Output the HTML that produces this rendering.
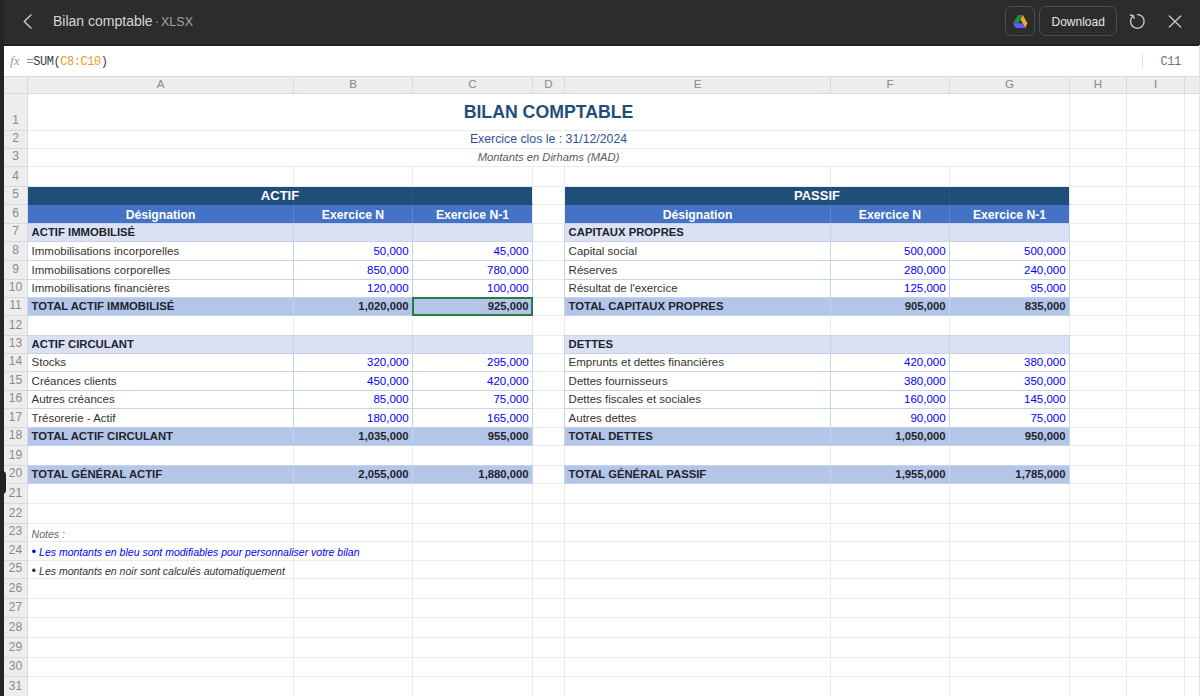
<!DOCTYPE html><html><head><meta charset="utf-8"><style>
*{box-sizing:border-box;margin:0;padding:0}
html,body{width:1200px;height:696px;overflow:hidden;background:#fff;font-family:"Liberation Sans", sans-serif}
.a{position:absolute}
.c{position:absolute;border-right:1px solid #e9eaf2;border-bottom:1px solid #e9eaf2;overflow:visible}
.t{position:absolute;white-space:nowrap;font-size:11.5px;color:#333}
.b{font-weight:700;color:#23232d;font-size:11.3px!important}
.n{color:#0000ff}
.rh{position:absolute;left:4px;width:24px;background:#ededed;border-right:1px solid #d6d9e4;border-bottom:1px solid #d6d9e4;font-size:12px;color:#8a8a8a;text-align:center}
.ch{position:absolute;top:77px;height:17px;background:#ededed;border-right:1px solid #d6d9e4;border-bottom:1px solid #d6d9e4;font-size:11.6px;color:#888;text-align:center;line-height:14.8px}
</style></head><body>

<div class="c" style="left:28px;top:94px;width:1042px;height:37px;"></div>
<div class="c" style="left:28px;top:131px;width:1042px;height:18px;"></div>
<div class="c" style="left:28px;top:149px;width:1042px;height:18px;"></div>
<div class="c" style="left:28px;top:187px;width:505px;height:18px;background:#1f4e79;border-bottom-color:#1f4e79;"></div>
<div class="c" style="left:565px;top:187px;width:505px;height:18px;background:#1f4e79;border-bottom-color:#1f4e79;"></div>
<div class="c" style="left:28px;top:205px;width:266px;height:19px;background:#4472c4;border-bottom-color:#4472c4;border-right-color:#5f86cf;"></div>
<div class="c" style="left:294px;top:205px;width:119px;height:19px;background:#4472c4;border-bottom-color:#4472c4;border-right-color:#5f86cf;"></div>
<div class="c" style="left:413px;top:205px;width:120px;height:19px;background:#4472c4;border-bottom-color:#4472c4;"></div>
<div class="c" style="left:565px;top:205px;width:266px;height:19px;background:#4472c4;border-bottom-color:#4472c4;border-right-color:#5f86cf;"></div>
<div class="c" style="left:831px;top:205px;width:119px;height:19px;background:#4472c4;border-bottom-color:#4472c4;border-right-color:#5f86cf;"></div>
<div class="c" style="left:950px;top:205px;width:120px;height:19px;background:#4472c4;border-bottom-color:#4472c4;"></div>
<div class="c" style="left:28px;top:224px;width:266px;height:18px;background:#d9e1f2;"></div>
<div class="c" style="left:294px;top:224px;width:119px;height:18px;background:#d9e1f2;"></div>
<div class="c" style="left:413px;top:224px;width:120px;height:18px;background:#d9e1f2;"></div>
<div class="c" style="left:28px;top:242px;width:266px;height:19px;"></div>
<div class="c" style="left:294px;top:242px;width:119px;height:19px;"></div>
<div class="c" style="left:413px;top:242px;width:120px;height:19px;"></div>
<div class="c" style="left:28px;top:261px;width:266px;height:19px;"></div>
<div class="c" style="left:294px;top:261px;width:119px;height:19px;"></div>
<div class="c" style="left:413px;top:261px;width:120px;height:19px;"></div>
<div class="c" style="left:28px;top:280px;width:266px;height:18px;"></div>
<div class="c" style="left:294px;top:280px;width:119px;height:18px;"></div>
<div class="c" style="left:413px;top:280px;width:120px;height:18px;"></div>
<div class="c" style="left:28px;top:298px;width:266px;height:18px;background:#b4c6e7;"></div>
<div class="c" style="left:294px;top:298px;width:119px;height:18px;background:#b4c6e7;"></div>
<div class="c" style="left:413px;top:298px;width:120px;height:18px;background:#b4c6e7;"></div>
<div class="c" style="left:28px;top:336px;width:266px;height:18px;background:#d9e1f2;"></div>
<div class="c" style="left:294px;top:336px;width:119px;height:18px;background:#d9e1f2;"></div>
<div class="c" style="left:413px;top:336px;width:120px;height:18px;background:#d9e1f2;"></div>
<div class="c" style="left:28px;top:354px;width:266px;height:18px;"></div>
<div class="c" style="left:294px;top:354px;width:119px;height:18px;"></div>
<div class="c" style="left:413px;top:354px;width:120px;height:18px;"></div>
<div class="c" style="left:28px;top:372px;width:266px;height:19px;"></div>
<div class="c" style="left:294px;top:372px;width:119px;height:19px;"></div>
<div class="c" style="left:413px;top:372px;width:120px;height:19px;"></div>
<div class="c" style="left:28px;top:391px;width:266px;height:18px;"></div>
<div class="c" style="left:294px;top:391px;width:119px;height:18px;"></div>
<div class="c" style="left:413px;top:391px;width:120px;height:18px;"></div>
<div class="c" style="left:28px;top:409px;width:266px;height:19px;"></div>
<div class="c" style="left:294px;top:409px;width:119px;height:19px;"></div>
<div class="c" style="left:413px;top:409px;width:120px;height:19px;"></div>
<div class="c" style="left:28px;top:428px;width:266px;height:18px;background:#b4c6e7;"></div>
<div class="c" style="left:294px;top:428px;width:119px;height:18px;background:#b4c6e7;"></div>
<div class="c" style="left:413px;top:428px;width:120px;height:18px;background:#b4c6e7;"></div>
<div class="c" style="left:28px;top:466px;width:266px;height:18px;background:#b4c6e7;"></div>
<div class="c" style="left:294px;top:466px;width:119px;height:18px;background:#b4c6e7;"></div>
<div class="c" style="left:413px;top:466px;width:120px;height:18px;background:#b4c6e7;"></div>
<div class="c" style="left:565px;top:224px;width:266px;height:18px;background:#d9e1f2;"></div>
<div class="c" style="left:831px;top:224px;width:119px;height:18px;background:#d9e1f2;"></div>
<div class="c" style="left:950px;top:224px;width:120px;height:18px;background:#d9e1f2;"></div>
<div class="c" style="left:565px;top:242px;width:266px;height:19px;"></div>
<div class="c" style="left:831px;top:242px;width:119px;height:19px;"></div>
<div class="c" style="left:950px;top:242px;width:120px;height:19px;"></div>
<div class="c" style="left:565px;top:261px;width:266px;height:19px;"></div>
<div class="c" style="left:831px;top:261px;width:119px;height:19px;"></div>
<div class="c" style="left:950px;top:261px;width:120px;height:19px;"></div>
<div class="c" style="left:565px;top:280px;width:266px;height:18px;"></div>
<div class="c" style="left:831px;top:280px;width:119px;height:18px;"></div>
<div class="c" style="left:950px;top:280px;width:120px;height:18px;"></div>
<div class="c" style="left:565px;top:298px;width:266px;height:18px;background:#b4c6e7;"></div>
<div class="c" style="left:831px;top:298px;width:119px;height:18px;background:#b4c6e7;"></div>
<div class="c" style="left:950px;top:298px;width:120px;height:18px;background:#b4c6e7;"></div>
<div class="c" style="left:565px;top:336px;width:266px;height:18px;background:#d9e1f2;"></div>
<div class="c" style="left:831px;top:336px;width:119px;height:18px;background:#d9e1f2;"></div>
<div class="c" style="left:950px;top:336px;width:120px;height:18px;background:#d9e1f2;"></div>
<div class="c" style="left:565px;top:354px;width:266px;height:18px;"></div>
<div class="c" style="left:831px;top:354px;width:119px;height:18px;"></div>
<div class="c" style="left:950px;top:354px;width:120px;height:18px;"></div>
<div class="c" style="left:565px;top:372px;width:266px;height:19px;"></div>
<div class="c" style="left:831px;top:372px;width:119px;height:19px;"></div>
<div class="c" style="left:950px;top:372px;width:120px;height:19px;"></div>
<div class="c" style="left:565px;top:391px;width:266px;height:18px;"></div>
<div class="c" style="left:831px;top:391px;width:119px;height:18px;"></div>
<div class="c" style="left:950px;top:391px;width:120px;height:18px;"></div>
<div class="c" style="left:565px;top:409px;width:266px;height:19px;"></div>
<div class="c" style="left:831px;top:409px;width:119px;height:19px;"></div>
<div class="c" style="left:950px;top:409px;width:120px;height:19px;"></div>
<div class="c" style="left:565px;top:428px;width:266px;height:18px;background:#b4c6e7;"></div>
<div class="c" style="left:831px;top:428px;width:119px;height:18px;background:#b4c6e7;"></div>
<div class="c" style="left:950px;top:428px;width:120px;height:18px;background:#b4c6e7;"></div>
<div class="c" style="left:565px;top:466px;width:266px;height:18px;background:#b4c6e7;"></div>
<div class="c" style="left:831px;top:466px;width:119px;height:18px;background:#b4c6e7;"></div>
<div class="c" style="left:950px;top:466px;width:120px;height:18px;background:#b4c6e7;"></div>
<div class="c" style="left:28px;top:524px;width:266px;height:18px;"></div>
<div class="c" style="left:28px;top:542px;width:266px;height:19px;"></div>
<div class="c" style="left:28px;top:561px;width:266px;height:18px;"></div>
<div class="c" style="left:1070px;top:94px;width:57px;height:37px;"></div>
<div class="c" style="left:1127px;top:94px;width:58px;height:37px;"></div>
<div class="c" style="left:1185px;top:94px;width:58px;height:37px;"></div>
<div class="c" style="left:1070px;top:131px;width:57px;height:18px;"></div>
<div class="c" style="left:1127px;top:131px;width:58px;height:18px;"></div>
<div class="c" style="left:1185px;top:131px;width:58px;height:18px;"></div>
<div class="c" style="left:1070px;top:149px;width:57px;height:18px;"></div>
<div class="c" style="left:1127px;top:149px;width:58px;height:18px;"></div>
<div class="c" style="left:1185px;top:149px;width:58px;height:18px;"></div>
<div class="c" style="left:28px;top:167px;width:266px;height:20px;"></div>
<div class="c" style="left:294px;top:167px;width:119px;height:20px;"></div>
<div class="c" style="left:413px;top:167px;width:120px;height:20px;"></div>
<div class="c" style="left:533px;top:167px;width:32px;height:20px;"></div>
<div class="c" style="left:565px;top:167px;width:266px;height:20px;"></div>
<div class="c" style="left:831px;top:167px;width:119px;height:20px;"></div>
<div class="c" style="left:950px;top:167px;width:120px;height:20px;"></div>
<div class="c" style="left:1070px;top:167px;width:57px;height:20px;"></div>
<div class="c" style="left:1127px;top:167px;width:58px;height:20px;"></div>
<div class="c" style="left:1185px;top:167px;width:58px;height:20px;"></div>
<div class="c" style="left:533px;top:187px;width:32px;height:18px;"></div>
<div class="c" style="left:1070px;top:187px;width:57px;height:18px;"></div>
<div class="c" style="left:1127px;top:187px;width:58px;height:18px;"></div>
<div class="c" style="left:1185px;top:187px;width:58px;height:18px;"></div>
<div class="c" style="left:533px;top:205px;width:32px;height:19px;"></div>
<div class="c" style="left:1070px;top:205px;width:57px;height:19px;"></div>
<div class="c" style="left:1127px;top:205px;width:58px;height:19px;"></div>
<div class="c" style="left:1185px;top:205px;width:58px;height:19px;"></div>
<div class="c" style="left:533px;top:224px;width:32px;height:18px;"></div>
<div class="c" style="left:1070px;top:224px;width:57px;height:18px;"></div>
<div class="c" style="left:1127px;top:224px;width:58px;height:18px;"></div>
<div class="c" style="left:1185px;top:224px;width:58px;height:18px;"></div>
<div class="c" style="left:533px;top:242px;width:32px;height:19px;"></div>
<div class="c" style="left:1070px;top:242px;width:57px;height:19px;"></div>
<div class="c" style="left:1127px;top:242px;width:58px;height:19px;"></div>
<div class="c" style="left:1185px;top:242px;width:58px;height:19px;"></div>
<div class="c" style="left:533px;top:261px;width:32px;height:19px;"></div>
<div class="c" style="left:1070px;top:261px;width:57px;height:19px;"></div>
<div class="c" style="left:1127px;top:261px;width:58px;height:19px;"></div>
<div class="c" style="left:1185px;top:261px;width:58px;height:19px;"></div>
<div class="c" style="left:533px;top:280px;width:32px;height:18px;"></div>
<div class="c" style="left:1070px;top:280px;width:57px;height:18px;"></div>
<div class="c" style="left:1127px;top:280px;width:58px;height:18px;"></div>
<div class="c" style="left:1185px;top:280px;width:58px;height:18px;"></div>
<div class="c" style="left:533px;top:298px;width:32px;height:18px;"></div>
<div class="c" style="left:1070px;top:298px;width:57px;height:18px;"></div>
<div class="c" style="left:1127px;top:298px;width:58px;height:18px;"></div>
<div class="c" style="left:1185px;top:298px;width:58px;height:18px;"></div>
<div class="c" style="left:28px;top:316px;width:266px;height:20px;"></div>
<div class="c" style="left:294px;top:316px;width:119px;height:20px;"></div>
<div class="c" style="left:413px;top:316px;width:120px;height:20px;"></div>
<div class="c" style="left:533px;top:316px;width:32px;height:20px;"></div>
<div class="c" style="left:565px;top:316px;width:266px;height:20px;"></div>
<div class="c" style="left:831px;top:316px;width:119px;height:20px;"></div>
<div class="c" style="left:950px;top:316px;width:120px;height:20px;"></div>
<div class="c" style="left:1070px;top:316px;width:57px;height:20px;"></div>
<div class="c" style="left:1127px;top:316px;width:58px;height:20px;"></div>
<div class="c" style="left:1185px;top:316px;width:58px;height:20px;"></div>
<div class="c" style="left:533px;top:336px;width:32px;height:18px;"></div>
<div class="c" style="left:1070px;top:336px;width:57px;height:18px;"></div>
<div class="c" style="left:1127px;top:336px;width:58px;height:18px;"></div>
<div class="c" style="left:1185px;top:336px;width:58px;height:18px;"></div>
<div class="c" style="left:533px;top:354px;width:32px;height:18px;"></div>
<div class="c" style="left:1070px;top:354px;width:57px;height:18px;"></div>
<div class="c" style="left:1127px;top:354px;width:58px;height:18px;"></div>
<div class="c" style="left:1185px;top:354px;width:58px;height:18px;"></div>
<div class="c" style="left:533px;top:372px;width:32px;height:19px;"></div>
<div class="c" style="left:1070px;top:372px;width:57px;height:19px;"></div>
<div class="c" style="left:1127px;top:372px;width:58px;height:19px;"></div>
<div class="c" style="left:1185px;top:372px;width:58px;height:19px;"></div>
<div class="c" style="left:533px;top:391px;width:32px;height:18px;"></div>
<div class="c" style="left:1070px;top:391px;width:57px;height:18px;"></div>
<div class="c" style="left:1127px;top:391px;width:58px;height:18px;"></div>
<div class="c" style="left:1185px;top:391px;width:58px;height:18px;"></div>
<div class="c" style="left:533px;top:409px;width:32px;height:19px;"></div>
<div class="c" style="left:1070px;top:409px;width:57px;height:19px;"></div>
<div class="c" style="left:1127px;top:409px;width:58px;height:19px;"></div>
<div class="c" style="left:1185px;top:409px;width:58px;height:19px;"></div>
<div class="c" style="left:533px;top:428px;width:32px;height:18px;"></div>
<div class="c" style="left:1070px;top:428px;width:57px;height:18px;"></div>
<div class="c" style="left:1127px;top:428px;width:58px;height:18px;"></div>
<div class="c" style="left:1185px;top:428px;width:58px;height:18px;"></div>
<div class="c" style="left:28px;top:446px;width:266px;height:20px;"></div>
<div class="c" style="left:294px;top:446px;width:119px;height:20px;"></div>
<div class="c" style="left:413px;top:446px;width:120px;height:20px;"></div>
<div class="c" style="left:533px;top:446px;width:32px;height:20px;"></div>
<div class="c" style="left:565px;top:446px;width:266px;height:20px;"></div>
<div class="c" style="left:831px;top:446px;width:119px;height:20px;"></div>
<div class="c" style="left:950px;top:446px;width:120px;height:20px;"></div>
<div class="c" style="left:1070px;top:446px;width:57px;height:20px;"></div>
<div class="c" style="left:1127px;top:446px;width:58px;height:20px;"></div>
<div class="c" style="left:1185px;top:446px;width:58px;height:20px;"></div>
<div class="c" style="left:533px;top:466px;width:32px;height:18px;"></div>
<div class="c" style="left:1070px;top:466px;width:57px;height:18px;"></div>
<div class="c" style="left:1127px;top:466px;width:58px;height:18px;"></div>
<div class="c" style="left:1185px;top:466px;width:58px;height:18px;"></div>
<div class="c" style="left:28px;top:484px;width:266px;height:20px;"></div>
<div class="c" style="left:294px;top:484px;width:119px;height:20px;"></div>
<div class="c" style="left:413px;top:484px;width:120px;height:20px;"></div>
<div class="c" style="left:533px;top:484px;width:32px;height:20px;"></div>
<div class="c" style="left:565px;top:484px;width:266px;height:20px;"></div>
<div class="c" style="left:831px;top:484px;width:119px;height:20px;"></div>
<div class="c" style="left:950px;top:484px;width:120px;height:20px;"></div>
<div class="c" style="left:1070px;top:484px;width:57px;height:20px;"></div>
<div class="c" style="left:1127px;top:484px;width:58px;height:20px;"></div>
<div class="c" style="left:1185px;top:484px;width:58px;height:20px;"></div>
<div class="c" style="left:28px;top:504px;width:266px;height:20px;"></div>
<div class="c" style="left:294px;top:504px;width:119px;height:20px;"></div>
<div class="c" style="left:413px;top:504px;width:120px;height:20px;"></div>
<div class="c" style="left:533px;top:504px;width:32px;height:20px;"></div>
<div class="c" style="left:565px;top:504px;width:266px;height:20px;"></div>
<div class="c" style="left:831px;top:504px;width:119px;height:20px;"></div>
<div class="c" style="left:950px;top:504px;width:120px;height:20px;"></div>
<div class="c" style="left:1070px;top:504px;width:57px;height:20px;"></div>
<div class="c" style="left:1127px;top:504px;width:58px;height:20px;"></div>
<div class="c" style="left:1185px;top:504px;width:58px;height:20px;"></div>
<div class="c" style="left:294px;top:524px;width:119px;height:18px;"></div>
<div class="c" style="left:413px;top:524px;width:120px;height:18px;"></div>
<div class="c" style="left:533px;top:524px;width:32px;height:18px;"></div>
<div class="c" style="left:565px;top:524px;width:266px;height:18px;"></div>
<div class="c" style="left:831px;top:524px;width:119px;height:18px;"></div>
<div class="c" style="left:950px;top:524px;width:120px;height:18px;"></div>
<div class="c" style="left:1070px;top:524px;width:57px;height:18px;"></div>
<div class="c" style="left:1127px;top:524px;width:58px;height:18px;"></div>
<div class="c" style="left:1185px;top:524px;width:58px;height:18px;"></div>
<div class="c" style="left:294px;top:542px;width:119px;height:19px;"></div>
<div class="c" style="left:413px;top:542px;width:120px;height:19px;"></div>
<div class="c" style="left:533px;top:542px;width:32px;height:19px;"></div>
<div class="c" style="left:565px;top:542px;width:266px;height:19px;"></div>
<div class="c" style="left:831px;top:542px;width:119px;height:19px;"></div>
<div class="c" style="left:950px;top:542px;width:120px;height:19px;"></div>
<div class="c" style="left:1070px;top:542px;width:57px;height:19px;"></div>
<div class="c" style="left:1127px;top:542px;width:58px;height:19px;"></div>
<div class="c" style="left:1185px;top:542px;width:58px;height:19px;"></div>
<div class="c" style="left:294px;top:561px;width:119px;height:18px;"></div>
<div class="c" style="left:413px;top:561px;width:120px;height:18px;"></div>
<div class="c" style="left:533px;top:561px;width:32px;height:18px;"></div>
<div class="c" style="left:565px;top:561px;width:266px;height:18px;"></div>
<div class="c" style="left:831px;top:561px;width:119px;height:18px;"></div>
<div class="c" style="left:950px;top:561px;width:120px;height:18px;"></div>
<div class="c" style="left:1070px;top:561px;width:57px;height:18px;"></div>
<div class="c" style="left:1127px;top:561px;width:58px;height:18px;"></div>
<div class="c" style="left:1185px;top:561px;width:58px;height:18px;"></div>
<div class="c" style="left:28px;top:579px;width:266px;height:20px;"></div>
<div class="c" style="left:294px;top:579px;width:119px;height:20px;"></div>
<div class="c" style="left:413px;top:579px;width:120px;height:20px;"></div>
<div class="c" style="left:533px;top:579px;width:32px;height:20px;"></div>
<div class="c" style="left:565px;top:579px;width:266px;height:20px;"></div>
<div class="c" style="left:831px;top:579px;width:119px;height:20px;"></div>
<div class="c" style="left:950px;top:579px;width:120px;height:20px;"></div>
<div class="c" style="left:1070px;top:579px;width:57px;height:20px;"></div>
<div class="c" style="left:1127px;top:579px;width:58px;height:20px;"></div>
<div class="c" style="left:1185px;top:579px;width:58px;height:20px;"></div>
<div class="c" style="left:28px;top:599px;width:266px;height:19px;"></div>
<div class="c" style="left:294px;top:599px;width:119px;height:19px;"></div>
<div class="c" style="left:413px;top:599px;width:120px;height:19px;"></div>
<div class="c" style="left:533px;top:599px;width:32px;height:19px;"></div>
<div class="c" style="left:565px;top:599px;width:266px;height:19px;"></div>
<div class="c" style="left:831px;top:599px;width:119px;height:19px;"></div>
<div class="c" style="left:950px;top:599px;width:120px;height:19px;"></div>
<div class="c" style="left:1070px;top:599px;width:57px;height:19px;"></div>
<div class="c" style="left:1127px;top:599px;width:58px;height:19px;"></div>
<div class="c" style="left:1185px;top:599px;width:58px;height:19px;"></div>
<div class="c" style="left:28px;top:618px;width:266px;height:20px;"></div>
<div class="c" style="left:294px;top:618px;width:119px;height:20px;"></div>
<div class="c" style="left:413px;top:618px;width:120px;height:20px;"></div>
<div class="c" style="left:533px;top:618px;width:32px;height:20px;"></div>
<div class="c" style="left:565px;top:618px;width:266px;height:20px;"></div>
<div class="c" style="left:831px;top:618px;width:119px;height:20px;"></div>
<div class="c" style="left:950px;top:618px;width:120px;height:20px;"></div>
<div class="c" style="left:1070px;top:618px;width:57px;height:20px;"></div>
<div class="c" style="left:1127px;top:618px;width:58px;height:20px;"></div>
<div class="c" style="left:1185px;top:618px;width:58px;height:20px;"></div>
<div class="c" style="left:28px;top:638px;width:266px;height:20px;"></div>
<div class="c" style="left:294px;top:638px;width:119px;height:20px;"></div>
<div class="c" style="left:413px;top:638px;width:120px;height:20px;"></div>
<div class="c" style="left:533px;top:638px;width:32px;height:20px;"></div>
<div class="c" style="left:565px;top:638px;width:266px;height:20px;"></div>
<div class="c" style="left:831px;top:638px;width:119px;height:20px;"></div>
<div class="c" style="left:950px;top:638px;width:120px;height:20px;"></div>
<div class="c" style="left:1070px;top:638px;width:57px;height:20px;"></div>
<div class="c" style="left:1127px;top:638px;width:58px;height:20px;"></div>
<div class="c" style="left:1185px;top:638px;width:58px;height:20px;"></div>
<div class="c" style="left:28px;top:658px;width:266px;height:19px;"></div>
<div class="c" style="left:294px;top:658px;width:119px;height:19px;"></div>
<div class="c" style="left:413px;top:658px;width:120px;height:19px;"></div>
<div class="c" style="left:533px;top:658px;width:32px;height:19px;"></div>
<div class="c" style="left:565px;top:658px;width:266px;height:19px;"></div>
<div class="c" style="left:831px;top:658px;width:119px;height:19px;"></div>
<div class="c" style="left:950px;top:658px;width:120px;height:19px;"></div>
<div class="c" style="left:1070px;top:658px;width:57px;height:19px;"></div>
<div class="c" style="left:1127px;top:658px;width:58px;height:19px;"></div>
<div class="c" style="left:1185px;top:658px;width:58px;height:19px;"></div>
<div class="c" style="left:28px;top:677px;width:266px;height:20px;"></div>
<div class="c" style="left:294px;top:677px;width:119px;height:20px;"></div>
<div class="c" style="left:413px;top:677px;width:120px;height:20px;"></div>
<div class="c" style="left:533px;top:677px;width:32px;height:20px;"></div>
<div class="c" style="left:565px;top:677px;width:266px;height:20px;"></div>
<div class="c" style="left:831px;top:677px;width:119px;height:20px;"></div>
<div class="c" style="left:950px;top:677px;width:120px;height:20px;"></div>
<div class="c" style="left:1070px;top:677px;width:57px;height:20px;"></div>
<div class="c" style="left:1127px;top:677px;width:58px;height:20px;"></div>
<div class="c" style="left:1185px;top:677px;width:58px;height:20px;"></div>
<div class="a" style="left:27px;top:223px;width:267px;height:19px;border:1px solid #c6d3ef;"></div>
<div class="a" style="left:293px;top:223px;width:120px;height:19px;border:1px solid #c6d3ef;"></div>
<div class="a" style="left:412px;top:223px;width:121px;height:19px;border:1px solid #c6d3ef;"></div>
<div class="a" style="left:27px;top:241px;width:267px;height:20px;border:1px solid #c6d3ef;"></div>
<div class="a" style="left:293px;top:241px;width:120px;height:20px;border:1px solid #c6d3ef;"></div>
<div class="a" style="left:412px;top:241px;width:121px;height:20px;border:1px solid #c6d3ef;"></div>
<div class="a" style="left:27px;top:260px;width:267px;height:20px;border:1px solid #c6d3ef;"></div>
<div class="a" style="left:293px;top:260px;width:120px;height:20px;border:1px solid #c6d3ef;"></div>
<div class="a" style="left:412px;top:260px;width:121px;height:20px;border:1px solid #c6d3ef;"></div>
<div class="a" style="left:27px;top:279px;width:267px;height:19px;border:1px solid #c6d3ef;"></div>
<div class="a" style="left:293px;top:279px;width:120px;height:19px;border:1px solid #c6d3ef;"></div>
<div class="a" style="left:412px;top:279px;width:121px;height:19px;border:1px solid #c6d3ef;"></div>
<div class="a" style="left:27px;top:297px;width:267px;height:19px;border:1px solid #c6d3ef;"></div>
<div class="a" style="left:293px;top:297px;width:120px;height:19px;border:1px solid #c6d3ef;"></div>
<div class="a" style="left:412px;top:297px;width:121px;height:19px;border:1px solid #c6d3ef;"></div>
<div class="a" style="left:27px;top:335px;width:267px;height:19px;border:1px solid #c6d3ef;"></div>
<div class="a" style="left:293px;top:335px;width:120px;height:19px;border:1px solid #c6d3ef;"></div>
<div class="a" style="left:412px;top:335px;width:121px;height:19px;border:1px solid #c6d3ef;"></div>
<div class="a" style="left:27px;top:353px;width:267px;height:19px;border:1px solid #c6d3ef;"></div>
<div class="a" style="left:293px;top:353px;width:120px;height:19px;border:1px solid #c6d3ef;"></div>
<div class="a" style="left:412px;top:353px;width:121px;height:19px;border:1px solid #c6d3ef;"></div>
<div class="a" style="left:27px;top:371px;width:267px;height:20px;border:1px solid #c6d3ef;"></div>
<div class="a" style="left:293px;top:371px;width:120px;height:20px;border:1px solid #c6d3ef;"></div>
<div class="a" style="left:412px;top:371px;width:121px;height:20px;border:1px solid #c6d3ef;"></div>
<div class="a" style="left:27px;top:390px;width:267px;height:19px;border:1px solid #c6d3ef;"></div>
<div class="a" style="left:293px;top:390px;width:120px;height:19px;border:1px solid #c6d3ef;"></div>
<div class="a" style="left:412px;top:390px;width:121px;height:19px;border:1px solid #c6d3ef;"></div>
<div class="a" style="left:27px;top:408px;width:267px;height:20px;border:1px solid #c6d3ef;"></div>
<div class="a" style="left:293px;top:408px;width:120px;height:20px;border:1px solid #c6d3ef;"></div>
<div class="a" style="left:412px;top:408px;width:121px;height:20px;border:1px solid #c6d3ef;"></div>
<div class="a" style="left:27px;top:427px;width:267px;height:19px;border:1px solid #c6d3ef;"></div>
<div class="a" style="left:293px;top:427px;width:120px;height:19px;border:1px solid #c6d3ef;"></div>
<div class="a" style="left:412px;top:427px;width:121px;height:19px;border:1px solid #c6d3ef;"></div>
<div class="a" style="left:27px;top:465px;width:267px;height:19px;border:1px solid #c6d3ef;"></div>
<div class="a" style="left:293px;top:465px;width:120px;height:19px;border:1px solid #c6d3ef;"></div>
<div class="a" style="left:412px;top:465px;width:121px;height:19px;border:1px solid #c6d3ef;"></div>
<div class="a" style="left:564px;top:223px;width:267px;height:19px;border:1px solid #c6d3ef;"></div>
<div class="a" style="left:830px;top:223px;width:120px;height:19px;border:1px solid #c6d3ef;"></div>
<div class="a" style="left:949px;top:223px;width:121px;height:19px;border:1px solid #c6d3ef;"></div>
<div class="a" style="left:564px;top:241px;width:267px;height:20px;border:1px solid #c6d3ef;"></div>
<div class="a" style="left:830px;top:241px;width:120px;height:20px;border:1px solid #c6d3ef;"></div>
<div class="a" style="left:949px;top:241px;width:121px;height:20px;border:1px solid #c6d3ef;"></div>
<div class="a" style="left:564px;top:260px;width:267px;height:20px;border:1px solid #c6d3ef;"></div>
<div class="a" style="left:830px;top:260px;width:120px;height:20px;border:1px solid #c6d3ef;"></div>
<div class="a" style="left:949px;top:260px;width:121px;height:20px;border:1px solid #c6d3ef;"></div>
<div class="a" style="left:564px;top:279px;width:267px;height:19px;border:1px solid #c6d3ef;"></div>
<div class="a" style="left:830px;top:279px;width:120px;height:19px;border:1px solid #c6d3ef;"></div>
<div class="a" style="left:949px;top:279px;width:121px;height:19px;border:1px solid #c6d3ef;"></div>
<div class="a" style="left:564px;top:297px;width:267px;height:19px;border:1px solid #c6d3ef;"></div>
<div class="a" style="left:830px;top:297px;width:120px;height:19px;border:1px solid #c6d3ef;"></div>
<div class="a" style="left:949px;top:297px;width:121px;height:19px;border:1px solid #c6d3ef;"></div>
<div class="a" style="left:564px;top:335px;width:267px;height:19px;border:1px solid #c6d3ef;"></div>
<div class="a" style="left:830px;top:335px;width:120px;height:19px;border:1px solid #c6d3ef;"></div>
<div class="a" style="left:949px;top:335px;width:121px;height:19px;border:1px solid #c6d3ef;"></div>
<div class="a" style="left:564px;top:353px;width:267px;height:19px;border:1px solid #c6d3ef;"></div>
<div class="a" style="left:830px;top:353px;width:120px;height:19px;border:1px solid #c6d3ef;"></div>
<div class="a" style="left:949px;top:353px;width:121px;height:19px;border:1px solid #c6d3ef;"></div>
<div class="a" style="left:564px;top:371px;width:267px;height:20px;border:1px solid #c6d3ef;"></div>
<div class="a" style="left:830px;top:371px;width:120px;height:20px;border:1px solid #c6d3ef;"></div>
<div class="a" style="left:949px;top:371px;width:121px;height:20px;border:1px solid #c6d3ef;"></div>
<div class="a" style="left:564px;top:390px;width:267px;height:19px;border:1px solid #c6d3ef;"></div>
<div class="a" style="left:830px;top:390px;width:120px;height:19px;border:1px solid #c6d3ef;"></div>
<div class="a" style="left:949px;top:390px;width:121px;height:19px;border:1px solid #c6d3ef;"></div>
<div class="a" style="left:564px;top:408px;width:267px;height:20px;border:1px solid #c6d3ef;"></div>
<div class="a" style="left:830px;top:408px;width:120px;height:20px;border:1px solid #c6d3ef;"></div>
<div class="a" style="left:949px;top:408px;width:121px;height:20px;border:1px solid #c6d3ef;"></div>
<div class="a" style="left:564px;top:427px;width:267px;height:19px;border:1px solid #c6d3ef;"></div>
<div class="a" style="left:830px;top:427px;width:120px;height:19px;border:1px solid #c6d3ef;"></div>
<div class="a" style="left:949px;top:427px;width:121px;height:19px;border:1px solid #c6d3ef;"></div>
<div class="a" style="left:564px;top:465px;width:267px;height:19px;border:1px solid #c6d3ef;"></div>
<div class="a" style="left:830px;top:465px;width:120px;height:19px;border:1px solid #c6d3ef;"></div>
<div class="a" style="left:949px;top:465px;width:121px;height:19px;border:1px solid #c6d3ef;"></div>
<div class="a" style="left:293px;top:187px;width:1px;height:18px;background:#2a5580"></div>
<div class="a" style="left:412px;top:187px;width:1px;height:18px;background:#2a5580"></div>
<div class="a" style="left:830px;top:187px;width:1px;height:18px;background:#2a5580"></div>
<div class="a" style="left:949px;top:187px;width:1px;height:18px;background:#2a5580"></div>
<div class="t " style="left:28px;width:1041px;text-align:center;top:94px;height:36px;line-height:36px;font-size:17.7px;font-weight:700;color:#1f4e79">BILAN COMPTABLE</div>
<div class="t " style="left:28px;width:1041px;text-align:center;top:131px;height:17px;line-height:17px;font-size:12.3px;color:#2f5496">Exercice clos le : 31/12/2024</div>
<div class="t " style="left:28px;width:1041px;text-align:center;top:149px;height:17px;line-height:17px;font-size:11.2px;font-style:italic;color:#595959">Montants en Dirhams (MAD)</div>
<div class="t " style="left:28px;width:504px;text-align:center;top:187px;height:17px;line-height:17px;font-size:13px;font-weight:700;color:#fff">ACTIF</div>
<div class="t " style="left:565px;width:504px;text-align:center;top:187px;height:17px;line-height:17px;font-size:13px;font-weight:700;color:#fff">PASSIF</div>
<div class="t " style="left:28px;width:265px;text-align:center;top:205.5px;height:18px;line-height:18px;font-size:12.2px;font-weight:700;color:#fff">Désignation</div>
<div class="t " style="left:294px;width:118px;text-align:center;top:205.5px;height:18px;line-height:18px;font-size:12.2px;font-weight:700;color:#fff">Exercice N</div>
<div class="t " style="left:413px;width:119px;text-align:center;top:205.5px;height:18px;line-height:18px;font-size:12.2px;font-weight:700;color:#fff">Exercice N-1</div>
<div class="t " style="left:565px;width:265px;text-align:center;top:205.5px;height:18px;line-height:18px;font-size:12.2px;font-weight:700;color:#fff">Désignation</div>
<div class="t " style="left:831px;width:118px;text-align:center;top:205.5px;height:18px;line-height:18px;font-size:12.2px;font-weight:700;color:#fff">Exercice N</div>
<div class="t " style="left:950px;width:119px;text-align:center;top:205.5px;height:18px;line-height:18px;font-size:12.2px;font-weight:700;color:#fff">Exercice N-1</div>
<div class="t b" style="left:28px;padding-left:3.6px;top:224px;height:17px;line-height:17px;">ACTIF IMMOBILISÉ</div>
<div class="t " style="left:28px;padding-left:3.6px;top:242px;height:18px;line-height:18px;">Immobilisations incorporelles</div>
<div class="t n" style="left:294px;width:118px;text-align:right;padding-right:3.4px;top:242px;height:18px;line-height:18px;">50,000</div>
<div class="t n" style="left:413px;width:119px;text-align:right;padding-right:3.4px;top:242px;height:18px;line-height:18px;">45,000</div>
<div class="t " style="left:28px;padding-left:3.6px;top:261px;height:18px;line-height:18px;">Immobilisations corporelles</div>
<div class="t n" style="left:294px;width:118px;text-align:right;padding-right:3.4px;top:261px;height:18px;line-height:18px;">850,000</div>
<div class="t n" style="left:413px;width:119px;text-align:right;padding-right:3.4px;top:261px;height:18px;line-height:18px;">780,000</div>
<div class="t " style="left:28px;padding-left:3.6px;top:280px;height:17px;line-height:17px;">Immobilisations financières</div>
<div class="t n" style="left:294px;width:118px;text-align:right;padding-right:3.4px;top:280px;height:17px;line-height:17px;">120,000</div>
<div class="t n" style="left:413px;width:119px;text-align:right;padding-right:3.4px;top:280px;height:17px;line-height:17px;">100,000</div>
<div class="t b" style="left:28px;padding-left:3.6px;top:298px;height:17px;line-height:17px;">TOTAL ACTIF IMMOBILISÉ</div>
<div class="t b" style="left:294px;width:118px;text-align:right;padding-right:3.4px;top:298px;height:17px;line-height:17px;">1,020,000</div>
<div class="t b" style="left:413px;width:119px;text-align:right;padding-right:3.4px;top:298px;height:17px;line-height:17px;">925,000</div>
<div class="t b" style="left:28px;padding-left:3.6px;top:336px;height:17px;line-height:17px;">ACTIF CIRCULANT</div>
<div class="t " style="left:28px;padding-left:3.6px;top:354px;height:17px;line-height:17px;">Stocks</div>
<div class="t n" style="left:294px;width:118px;text-align:right;padding-right:3.4px;top:354px;height:17px;line-height:17px;">320,000</div>
<div class="t n" style="left:413px;width:119px;text-align:right;padding-right:3.4px;top:354px;height:17px;line-height:17px;">295,000</div>
<div class="t " style="left:28px;padding-left:3.6px;top:372px;height:18px;line-height:18px;">Créances clients</div>
<div class="t n" style="left:294px;width:118px;text-align:right;padding-right:3.4px;top:372px;height:18px;line-height:18px;">450,000</div>
<div class="t n" style="left:413px;width:119px;text-align:right;padding-right:3.4px;top:372px;height:18px;line-height:18px;">420,000</div>
<div class="t " style="left:28px;padding-left:3.6px;top:391px;height:17px;line-height:17px;">Autres créances</div>
<div class="t n" style="left:294px;width:118px;text-align:right;padding-right:3.4px;top:391px;height:17px;line-height:17px;">85,000</div>
<div class="t n" style="left:413px;width:119px;text-align:right;padding-right:3.4px;top:391px;height:17px;line-height:17px;">75,000</div>
<div class="t " style="left:28px;padding-left:3.6px;top:409px;height:18px;line-height:18px;">Trésorerie - Actif</div>
<div class="t n" style="left:294px;width:118px;text-align:right;padding-right:3.4px;top:409px;height:18px;line-height:18px;">180,000</div>
<div class="t n" style="left:413px;width:119px;text-align:right;padding-right:3.4px;top:409px;height:18px;line-height:18px;">165,000</div>
<div class="t b" style="left:28px;padding-left:3.6px;top:428px;height:17px;line-height:17px;">TOTAL ACTIF CIRCULANT</div>
<div class="t b" style="left:294px;width:118px;text-align:right;padding-right:3.4px;top:428px;height:17px;line-height:17px;">1,035,000</div>
<div class="t b" style="left:413px;width:119px;text-align:right;padding-right:3.4px;top:428px;height:17px;line-height:17px;">955,000</div>
<div class="t b" style="left:28px;padding-left:3.6px;top:466px;height:17px;line-height:17px;">TOTAL GÉNÉRAL ACTIF</div>
<div class="t b" style="left:294px;width:118px;text-align:right;padding-right:3.4px;top:466px;height:17px;line-height:17px;">2,055,000</div>
<div class="t b" style="left:413px;width:119px;text-align:right;padding-right:3.4px;top:466px;height:17px;line-height:17px;">1,880,000</div>
<div class="t b" style="left:565px;padding-left:3.6px;top:224px;height:17px;line-height:17px;">CAPITAUX PROPRES</div>
<div class="t " style="left:565px;padding-left:3.6px;top:242px;height:18px;line-height:18px;">Capital social</div>
<div class="t n" style="left:831px;width:118px;text-align:right;padding-right:3.4px;top:242px;height:18px;line-height:18px;">500,000</div>
<div class="t n" style="left:950px;width:119px;text-align:right;padding-right:3.4px;top:242px;height:18px;line-height:18px;">500,000</div>
<div class="t " style="left:565px;padding-left:3.6px;top:261px;height:18px;line-height:18px;">Réserves</div>
<div class="t n" style="left:831px;width:118px;text-align:right;padding-right:3.4px;top:261px;height:18px;line-height:18px;">280,000</div>
<div class="t n" style="left:950px;width:119px;text-align:right;padding-right:3.4px;top:261px;height:18px;line-height:18px;">240,000</div>
<div class="t " style="left:565px;padding-left:3.6px;top:280px;height:17px;line-height:17px;">Résultat de l'exercice</div>
<div class="t n" style="left:831px;width:118px;text-align:right;padding-right:3.4px;top:280px;height:17px;line-height:17px;">125,000</div>
<div class="t n" style="left:950px;width:119px;text-align:right;padding-right:3.4px;top:280px;height:17px;line-height:17px;">95,000</div>
<div class="t b" style="left:565px;padding-left:3.6px;top:298px;height:17px;line-height:17px;">TOTAL CAPITAUX PROPRES</div>
<div class="t b" style="left:831px;width:118px;text-align:right;padding-right:3.4px;top:298px;height:17px;line-height:17px;">905,000</div>
<div class="t b" style="left:950px;width:119px;text-align:right;padding-right:3.4px;top:298px;height:17px;line-height:17px;">835,000</div>
<div class="t b" style="left:565px;padding-left:3.6px;top:336px;height:17px;line-height:17px;">DETTES</div>
<div class="t " style="left:565px;padding-left:3.6px;top:354px;height:17px;line-height:17px;">Emprunts et dettes financières</div>
<div class="t n" style="left:831px;width:118px;text-align:right;padding-right:3.4px;top:354px;height:17px;line-height:17px;">420,000</div>
<div class="t n" style="left:950px;width:119px;text-align:right;padding-right:3.4px;top:354px;height:17px;line-height:17px;">380,000</div>
<div class="t " style="left:565px;padding-left:3.6px;top:372px;height:18px;line-height:18px;">Dettes fournisseurs</div>
<div class="t n" style="left:831px;width:118px;text-align:right;padding-right:3.4px;top:372px;height:18px;line-height:18px;">380,000</div>
<div class="t n" style="left:950px;width:119px;text-align:right;padding-right:3.4px;top:372px;height:18px;line-height:18px;">350,000</div>
<div class="t " style="left:565px;padding-left:3.6px;top:391px;height:17px;line-height:17px;">Dettes fiscales et sociales</div>
<div class="t n" style="left:831px;width:118px;text-align:right;padding-right:3.4px;top:391px;height:17px;line-height:17px;">160,000</div>
<div class="t n" style="left:950px;width:119px;text-align:right;padding-right:3.4px;top:391px;height:17px;line-height:17px;">145,000</div>
<div class="t " style="left:565px;padding-left:3.6px;top:409px;height:18px;line-height:18px;">Autres dettes</div>
<div class="t n" style="left:831px;width:118px;text-align:right;padding-right:3.4px;top:409px;height:18px;line-height:18px;">90,000</div>
<div class="t n" style="left:950px;width:119px;text-align:right;padding-right:3.4px;top:409px;height:18px;line-height:18px;">75,000</div>
<div class="t b" style="left:565px;padding-left:3.6px;top:428px;height:17px;line-height:17px;">TOTAL DETTES</div>
<div class="t b" style="left:831px;width:118px;text-align:right;padding-right:3.4px;top:428px;height:17px;line-height:17px;">1,050,000</div>
<div class="t b" style="left:950px;width:119px;text-align:right;padding-right:3.4px;top:428px;height:17px;line-height:17px;">950,000</div>
<div class="t b" style="left:565px;padding-left:3.6px;top:466px;height:17px;line-height:17px;">TOTAL GÉNÉRAL PASSIF</div>
<div class="t b" style="left:831px;width:118px;text-align:right;padding-right:3.4px;top:466px;height:17px;line-height:17px;">1,955,000</div>
<div class="t b" style="left:950px;width:119px;text-align:right;padding-right:3.4px;top:466px;height:17px;line-height:17px;">1,785,000</div>
<div class="t " style="left:28px;padding-left:3.6px;top:525.5px;height:17px;line-height:17px;font-size:10.5px;font-style:italic;color:#666">Notes :</div>
<div class="t " style="left:28px;padding-left:3.6px;top:542.5px;height:18px;line-height:18px;font-size:10.5px;font-style:italic;color:#0000f5"><span style="font-style:normal;font-size:13px">•</span> Les montants en bleu sont modifiables pour personnaliser votre bilan</div>
<div class="t " style="left:28px;padding-left:3.6px;top:561.5px;height:17px;line-height:17px;font-size:10.5px;font-style:italic;color:#333"><span style="font-style:normal;font-size:13px">•</span> Les montants en noir sont calculés automatiquement</div>
<div class="a" style="left:412px;top:297px;width:121px;height:19px;border:2px solid #2a7a46"></div>
<div class="a" style="left:4px;top:76px;width:1196px;height:1px;background:#d6d9e4"></div>
<div class="ch" style="left:4px;width:24px"></div>
<div class="ch" style="left:28px;width:266px">A</div>
<div class="ch" style="left:294px;width:119px">B</div>
<div class="ch" style="left:413px;width:120px">C</div>
<div class="ch" style="left:533px;width:32px">D</div>
<div class="ch" style="left:565px;width:266px">E</div>
<div class="ch" style="left:831px;width:119px">F</div>
<div class="ch" style="left:950px;width:120px">G</div>
<div class="ch" style="left:1070px;width:57px">H</div>
<div class="ch" style="left:1127px;width:58px">I</div>
<div class="ch" style="left:1185px;width:58px">J</div>
<div class="rh" style="top:94px;height:37px;line-height:52.88px">1</div>
<div class="rh" style="top:131px;height:18px;line-height:14.88px">2</div>
<div class="rh" style="top:149px;height:18px;line-height:14.88px">3</div>
<div class="rh" style="top:167px;height:20px;line-height:18.88px">4</div>
<div class="rh" style="top:187px;height:18px;line-height:14.88px">5</div>
<div class="rh" style="top:205px;height:19px;line-height:16.88px">6</div>
<div class="rh" style="top:224px;height:18px;line-height:14.88px">7</div>
<div class="rh" style="top:242px;height:19px;line-height:16.88px">8</div>
<div class="rh" style="top:261px;height:19px;line-height:16.88px">9</div>
<div class="rh" style="top:280px;height:18px;line-height:14.88px">10</div>
<div class="rh" style="top:298px;height:18px;line-height:14.88px">11</div>
<div class="rh" style="top:316px;height:20px;line-height:18.88px">12</div>
<div class="rh" style="top:336px;height:18px;line-height:14.88px">13</div>
<div class="rh" style="top:354px;height:18px;line-height:14.88px">14</div>
<div class="rh" style="top:372px;height:19px;line-height:16.88px">15</div>
<div class="rh" style="top:391px;height:18px;line-height:14.88px">16</div>
<div class="rh" style="top:409px;height:19px;line-height:16.88px">17</div>
<div class="rh" style="top:428px;height:18px;line-height:14.88px">18</div>
<div class="rh" style="top:446px;height:20px;line-height:18.88px">19</div>
<div class="rh" style="top:466px;height:18px;line-height:14.88px">20</div>
<div class="rh" style="top:484px;height:20px;line-height:18.88px">21</div>
<div class="rh" style="top:504px;height:20px;line-height:18.88px">22</div>
<div class="rh" style="top:524px;height:18px;line-height:14.88px">23</div>
<div class="rh" style="top:542px;height:19px;line-height:16.88px">24</div>
<div class="rh" style="top:561px;height:18px;line-height:14.88px">25</div>
<div class="rh" style="top:579px;height:20px;line-height:18.88px">26</div>
<div class="rh" style="top:599px;height:19px;line-height:16.88px">27</div>
<div class="rh" style="top:618px;height:20px;line-height:18.88px">28</div>
<div class="rh" style="top:638px;height:20px;line-height:18.88px">29</div>
<div class="rh" style="top:658px;height:19px;line-height:16.88px">30</div>
<div class="rh" style="top:677px;height:20px;line-height:18.88px">31</div>
<div class="a" style="left:4px;top:45px;width:1196px;height:31px;background:#fff"></div>
<div class="a" style="left:10px;font-family:'Liberation Serif',serif;font-style:italic;font-size:13.5px;color:#a0a0a0;line-height:16px;top:52.5px">fx</div>
<div class="a" style="left:26.5px;top:53.5px;font-family:'Liberation Mono', monospace;font-size:12px;letter-spacing:-0.45px;color:#353b48;white-space:pre;line-height:16px"><span style="color:#8a8a8a">=</span>SUM(<span style="color:#f29b2a">C8:C10</span>)</div>
<div class="a" style="left:1142px;top:53px;width:1px;height:16px;background:#e3e3e3"></div>
<div class="a" style="left:1160.5px;top:54px;font-family:'Liberation Mono', monospace;font-size:12px;letter-spacing:-0.45px;color:#6f6f6f;line-height:16px">C11</div>

<div class="a" style="left:0;top:0;width:1200px;height:46px;background:#2c2c2c"></div>
<div class="a" style="left:0;top:0;width:3.5px;height:46px;background:#252525"></div>
<div class="a" style="left:0;top:44px;width:1200px;height:2px;background:#1f1f1f"></div>
<svg class="a" style="left:0;top:0" width="1200" height="45">
<polyline points="31,15 24.2,21.5 31,28" fill="none" stroke="#c9c9c9" stroke-width="1.5" stroke-linecap="round" stroke-linejoin="round"/>
</svg>
<div class="a" style="left:53px;top:12px;font-size:14px;color:#d6d6d6;line-height:18px;white-space:pre">Bilan comptable</div>
<div class="a" style="left:154.5px;top:12px;font-size:14px;color:#8f8f8f;line-height:18px">·</div>
<div class="a" style="left:161px;top:13.5px;font-size:12.5px;color:#a3a3a3;line-height:16px">XLSX</div>
<div class="a" style="left:1005px;top:6px;width:30px;height:30px;border:1px solid #4a4d5a;border-radius:6px"></div>
<svg class="a" style="left:1013px;top:14.7px" width="14.5" height="13.2" viewBox="0 0 14.5 13.2">
<polygon points="4.9,0 9.9,0 5.5,8.3 0,8.3" fill="#1f8a4c"/>
<polygon points="9.9,0 14.3,8.3 12.4,13.1 7.5,4.5" fill="#f5a623"/>
<polygon points="0,8.3 9.65,8.3 12.4,13.1 2.8,13.1" fill="#5a5ff2"/>
</svg>
<div class="a" style="left:1039px;top:6px;width:78px;height:30px;border:1px solid #4a4d5a;border-radius:7px"></div>
<div class="a" style="left:1051.5px;top:13.7px;font-size:12px;color:#e6e6e6;line-height:16px">Download</div>
<svg class="a" style="left:1122px;top:8px" width="30" height="27" viewBox="0 0 30 27">
<path d="M15.5,6.6 A6.8,6.8 0 1 1 11.4,7.9" fill="none" stroke="#c4c4c4" stroke-width="1.35" stroke-linecap="round"/>
<polyline points="8.3,7.0 11.6,7.6 12.2,10.4" fill="none" stroke="#c4c4c4" stroke-width="1.35" stroke-linecap="round" stroke-linejoin="round"/>
</svg>
<svg class="a" style="left:1165px;top:12px" width="20" height="20" viewBox="0 0 20 20">
<path d="M4.3,4 L15.7,15 M15.7,4 L4.3,15" stroke="#c4c4c4" stroke-width="1.4" stroke-linecap="round"/>
</svg>

<div class="a" style="left:1199px;top:45px;width:1px;height:651px;background:#e2e3e8"></div>
<div class="a" style="left:0;top:45px;width:4px;height:651px;background:#242424"></div>
<div class="a" style="left:0;top:471px;width:6px;height:23px;background:#222;border-radius:0 4px 4px 0"></div>

</body></html>
